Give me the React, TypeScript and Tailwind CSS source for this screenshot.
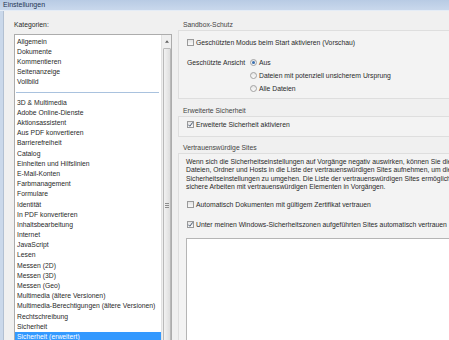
import React from "react";

// ── Data ───────────────────────────────────────────────────────────

const topCategories = ["Allgemein", "Dokumente", "Kommentieren", "Seitenanzeige", "Vollbild"];

const categories = [
  "3D & Multimedia",
  "Adobe Online-Dienste",
  "Aktionsassistent",
  "Aus PDF konvertieren",
  "Barrierefreiheit",
  "Catalog",
  "Einheiten und Hilfslinien",
  "E-Mail-Konten",
  "Farbmanagement",
  "Formulare",
  "Identität",
  "In PDF konvertieren",
  "Inhaltsbearbeitung",
  "Internet",
  "JavaScript",
  "Lesen",
  "Messen (2D)",
  "Messen (3D)",
  "Messen (Geo)",
  "Multimedia (ältere Versionen)",
  "Multimedia-Berechtigungen (ältere Versionen)",
  "Rechtschreibung",
  "Sicherheit",
  "Sicherheit (erweitert)",
];

const selected = "Sicherheit (erweitert)";

const paragraph = [
  "Wenn sich die Sicherheitseinstellungen auf Vorgänge negativ auswirken,  können Sie die",
  "Dateien, Ordner und Hosts in die Liste der vertrauenswürdigen Sites aufnehmen, um die",
  "Sicherheitseinstellungen zu umgehen. Die Liste der vertrauenswürdigen Sites ermöglicht",
  "sichere Arbeiten mit vertrauenswürdigen Elementen in Vorgängen.",
];

// ── Controls ───────────────────────────────────────────────────────

function CheckBox({ checked = false }: { checked?: boolean }) {
  return (
    <span className="relative inline-block w-[7px] h-[7px] shrink-0 border border-[#9a9a9a] bg-gradient-to-b from-[#e4e4e4] to-[#fafafa]">
      {checked && (
        <svg viewBox="0 0 8 8" className="absolute left-[-1px] top-[-1px] w-[7px] h-[7px]">
          <path d="M1.5 4.2 L3.2 6 L6.5 1.6" fill="none" stroke="#3d4f6a" strokeWidth="1.1" />
        </svg>
      )}
    </span>
  );
}

function Radio({ checked = false }: { checked?: boolean }) {
  return (
    <span className="flex items-center justify-center w-[7px] h-[7px] shrink-0 rounded-full border border-[#a2a2a2] bg-gradient-to-b from-[#e6e6e6] to-[#fbfbfb]">
      {checked && <span className="w-[3px] h-[3px] rounded-full bg-[#3a6fb0]" />}
    </span>
  );
}

function CheckRow({ checked, label }: { checked?: boolean; label: string }) {
  return (
    <div className="flex items-center gap-[2px] h-[9px] whitespace-nowrap">
      <CheckBox checked={checked} />
      <span>{label}</span>
    </div>
  );
}

function RadioRow({ checked, label }: { checked?: boolean; label: string }) {
  return (
    <div className="flex items-center gap-[2px] h-[9px] whitespace-nowrap">
      <Radio checked={checked} />
      <span>{label}</span>
    </div>
  );
}

// ── Page ───────────────────────────────────────────────────────────

export default function App() {
  return (
    <div
      className="w-[449px] h-[340px] overflow-hidden bg-[#f0f0f0] text-[6.8px] text-[#2a2a2a] flex flex-col"
      style={{ fontFamily: '"Liberation Sans", Arial, sans-serif' }}
    >
      {/* Title bar */}
      <div className="h-[10px] shrink-0 bg-gradient-to-b from-[#b8cbe4] to-[#c9d8ec] flex items-center pl-[3px] text-[#1f3553] text-[7px] leading-[10px]">
        Einstellungen
      </div>
      <div className="h-[1px] shrink-0 bg-[#e4ecf6]" />

      <div className="flex flex-1 min-h-0">
        {/* Window frame */}
        <div className="w-[4px] shrink-0 bg-[#cad8ea] border-r border-[#b2c0d2]" />

        {/* Categories */}
        <div className="w-[172px] shrink-0 flex flex-col">
          <div className="pl-[10px] pt-[9px] h-[18px] leading-[9px]">Kategorien:</div>
          <div className="ml-[10px] mt-[5px] w-[158px] flex-1 border border-[#acacac] bg-white flex">
            <div className="flex-1 pt-[1.5px] leading-[10.2px] whitespace-nowrap">
              {topCategories.map((c) => (
                <div key={c} className="h-[10.2px] pl-[2px]">
                  {c}
                </div>
              ))}
              <div className="h-[10.2px] flex items-center px-[1px]">
                <div className="w-[143px] h-[1px] bg-[#a9c2de]" />
              </div>
              {categories.map((c) => (
                <div
                  key={c}
                  className={
                    c === selected
                      ? "h-[10.2px] pl-[2px] bg-[#3399ff] text-white"
                      : "h-[10.2px] pl-[2px]"
                  }
                >
                  {c}
                </div>
              ))}
            </div>

            {/* Scrollbar */}
            <div className="w-[10px] shrink-0 bg-[#efefef] border-l border-[#e2e2e2] flex flex-col items-center">
              <div className="h-[12px] flex items-center justify-center">
                <svg viewBox="0 0 5 3" className="w-[4px] h-[3px]">
                  <path d="M0 3 L2.5 0 L5 3 Z" fill="#606060" />
                </svg>
              </div>
              <div className="mt-[1px] w-[8px] flex-1 rounded-[1px] border border-[#b9b9b9] bg-gradient-to-r from-[#f2f2f2] to-[#dedede] flex flex-col items-center pt-[154px]">
                <div className="flex flex-col gap-[1px]">
                  <div className="w-[4px] h-[1px] bg-[#8d8d8d]" />
                  <div className="w-[4px] h-[1px] bg-[#8d8d8d]" />
                  <div className="w-[4px] h-[1px] bg-[#8d8d8d]" />
                </div>
              </div>
            </div>
          </div>
        </div>

        {/* Settings */}
        <div className="flex-1 min-w-0 flex flex-col pl-[2px] leading-[9px]">
          <div className="pl-[5px] mt-[8.5px] h-[9px] text-[#444]">Sandbox-Schutz</div>
          <div className="mt-[1.5px] h-[69px] shrink-0 border-t border-l border-b border-[#dedede] bg-[#f3f3f3] pl-[8px] pt-[6.8px]">
            <CheckRow label="Geschützten Modus beim Start aktivieren (Vorschau)" />
            <div className="mt-[11px] flex">
              <div className="w-[63px] h-[9px] shrink-0 whitespace-nowrap">Geschützte Ansicht</div>
              <div className="flex flex-col gap-[4.2px]">
                <RadioRow checked label="Aus" />
                <RadioRow label="Dateien mit potenziell unsicherem Ursprung" />
                <RadioRow label="Alle Dateien" />
              </div>
            </div>
          </div>

          <div className="pl-[5px] mt-[7.2px] h-[9px] text-[#444]">Erweiterte Sicherheit</div>
          <div className="mt-[1px] h-[21px] shrink-0 border-t border-l border-b border-[#dedede] bg-[#f3f3f3] pl-[8px] pt-[3px]">
            <CheckRow checked label="Erweiterte Sicherheit aktivieren" />
          </div>

          <div className="pl-[5px] mt-[6px] h-[9px] text-[#444]">Vertrauenswürdige Sites</div>
          <div className="mt-[1px] flex-1 border-t border-l border-[#dedede] bg-[#f3f3f3] pl-[7px] pt-[3.8px] flex flex-col">
            <div className="leading-[8.3px] whitespace-nowrap">
              {paragraph.map((l) => (
                <div key={l}>{l}</div>
              ))}
            </div>
            <div className="mt-[8.7px] pl-[1px]">
              <CheckRow label="Automatisch Dokumenten mit gültigem Zertifikat vertrauen" />
            </div>
            <div className="mt-[10.7px] pl-[1px]">
              <CheckRow checked label="Unter meinen Windows-Sicherheitszonen aufgeführten Sites automatisch vertrauen" />
            </div>
            <div className="mt-[9.5px] flex-1 border-t border-l border-[#b5b5b5] bg-white" />
          </div>
        </div>
      </div>
    </div>
  );
}
